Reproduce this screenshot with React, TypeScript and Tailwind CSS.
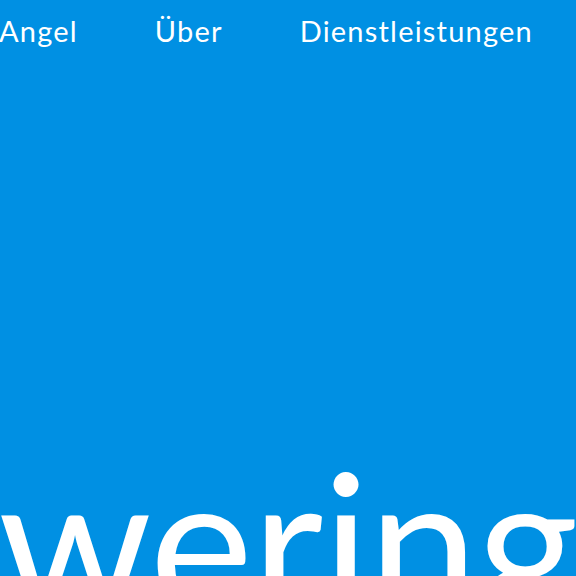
import React from "react";

const navItems = ["Angel", "Über", "Dienstleistungen"];

export default function App() {
    return (
        <div
            className="flex flex-col h-[576px] w-[576px] overflow-hidden bg-[#0090e3] text-white"
            style={{fontFamily: "Lato, 'Open Sans', sans-serif"}}
        >
            {/* Navigation */}
            <nav className="flex flex-row items-center gap-[77px] pt-[12px] -ml-[1px] whitespace-nowrap">
                {navItems.map((item) => (
                    <a key={item} className="text-[29px] leading-[38px] tracking-[1.2px]">
                        {item}
                    </a>
                ))}
            </nav>

            {/* Großer Schriftzug */}
            <div className="mt-auto -mb-[64px] -ml-[2px] whitespace-nowrap">
                <span className="block text-[196px] leading-[200px] tracking-[-1px]">wering</span>
            </div>
        </div>
    );
}
